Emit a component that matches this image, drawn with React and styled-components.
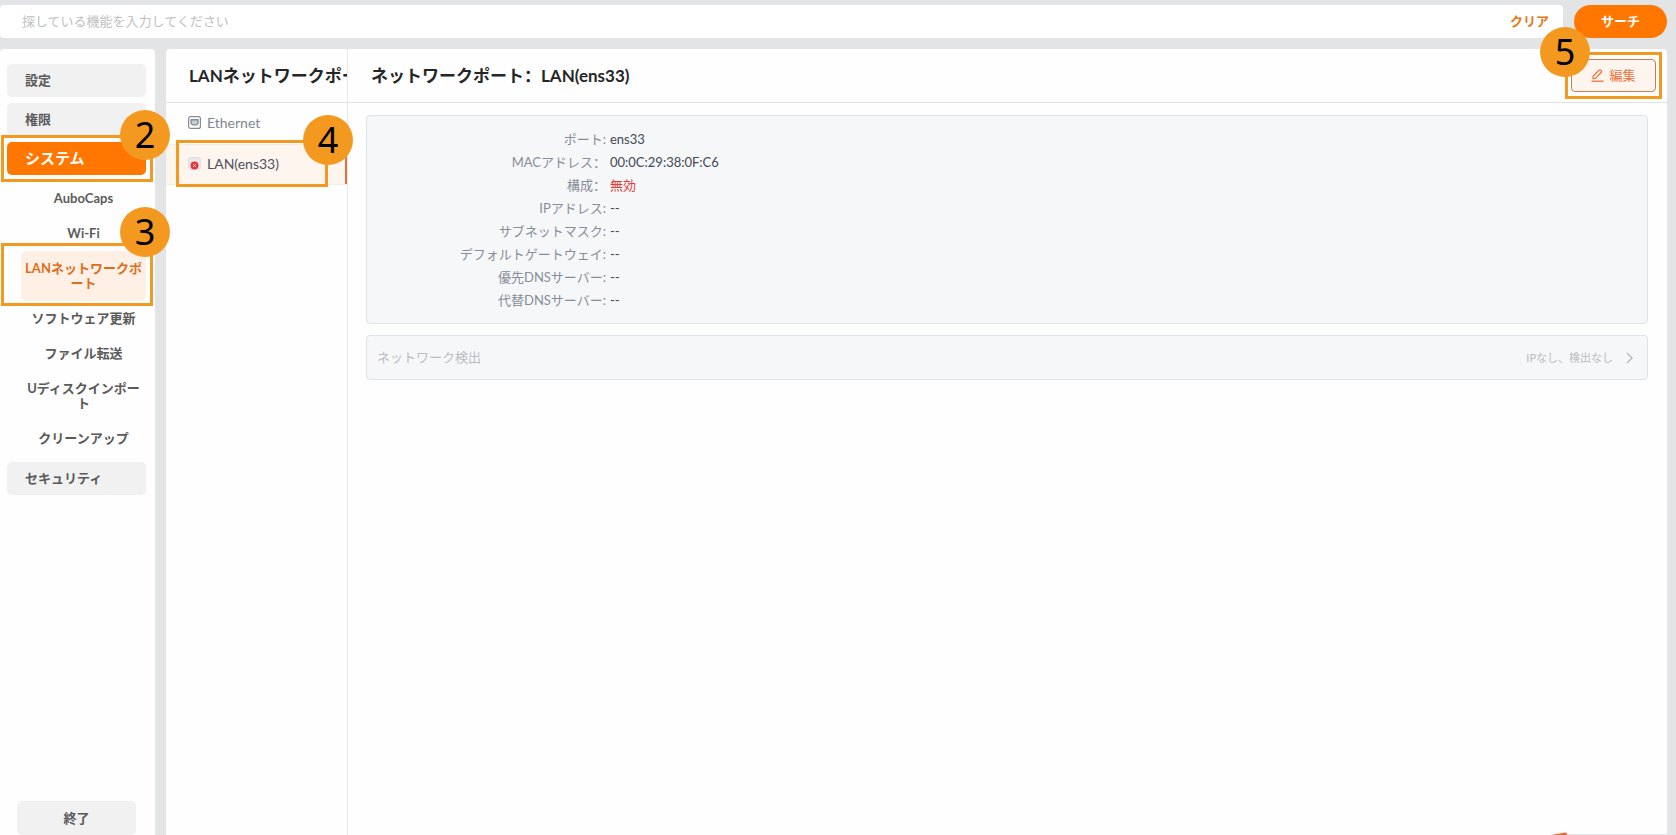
import styled, { createGlobalStyle } from "styled-components";

const GlobalStyle = createGlobalStyle`
  * {
    box-sizing: border-box;
  }

  body {
    margin: 0;
    background: #e2e4e6;
    color: #262626;
    font-family: "Lato", "Noto Sans CJK JP", sans-serif;
    font-size: 13px;
    line-height: 23px;
  }

  button,
  input {
    font: inherit;
  }
`;

const Page = styled.div`
  position: relative;
  display: flex;
  flex-direction: column;
  gap: 11px;
  height: 100vh;
  padding: 5px 9px 0 0;
  overflow: hidden;
`;

const SearchForm = styled.form`
  display: flex;
  gap: 11px;
  height: 33px;
`;

const SearchField = styled.div`
  display: flex;
  flex: 1;
  align-items: center;
  padding: 0 14px 0 22px;
  border-radius: 4px;
  background: #fff;
`;

const SearchInput = styled.input`
  flex: 1;
  padding: 0;
  border: none;
  outline: none;
  background: none;

  &::placeholder {
    color: #c0c0c0;
    opacity: 1;
  }
`;

const ClearButton = styled.button`
  padding: 0;
  border: none;
  background: none;
  color: #e87817;
  font-weight: 700;
`;

const SearchButton = styled.button`
  width: 93px;
  border: none;
  border-radius: 17px;
  background: #ff7700;
  color: #fff;
  font-weight: 700;
`;

const Body = styled.div`
  display: flex;
  flex: 1;
  gap: 11px;
  min-height: 0;
`;

const Sidebar = styled.nav`
  display: flex;
  flex-direction: column;
  justify-content: space-between;
  width: 155px;
  padding: 15px 9px 0 7px;
  border-radius: 4px 4px 0 0;
  background: #fefefe;
`;

const NavList = styled.div`
  display: flex;
  flex-direction: column;
  gap: 6px;
`;

const Marked = styled.div`
  position: relative;
`;

const NavButton = styled.button`
  display: block;
  width: 100%;
  height: 33px;
  padding: 0 18px;
  border: none;
  border-radius: 5px;
  background: ${({ $active }) => ($active ? "#ff7700" : "#f1f1f1")};
  color: ${({ $active }) => ($active ? "#fff" : "#5a5a5a")};
  font-size: ${({ $active }) => ($active ? "15px" : "13px")};
  font-weight: 700;
  text-align: left;
`;

const SubList = styled.div`
  padding-left: 14px;
`;

const SubButton = styled.button`
  display: block;
  width: 100%;
  padding: 10px 0;
  border: none;
  border-radius: 5px;
  background: ${({ $active }) => ($active ? "#fff0e6" : "none")};
  color: ${({ $active }) => ($active ? "#dc6e1c" : "#5a5a5a")};
  font-weight: 700;
  line-height: 15px;
  text-align: center;
`;

const ExitButton = styled.button`
  height: 34px;
  margin: 0 10px;
  border: none;
  border-radius: 5px;
  background: #f1f1f1;
  color: #5a5a5a;
  font-weight: 700;
`;

const Content = styled.main`
  display: flex;
  flex: 1;
  min-width: 0;
  border-radius: 4px 4px 0 0;
  background: #fefefe;
`;

const PortColumn = styled.section`
  width: 182px;
  border-right: 1px solid #e6e8ea;
`;

const ColumnHeader = styled.header`
  display: flex;
  align-items: center;
  justify-content: space-between;
  height: 54px;
  padding-left: 23px;
  padding-right: 11px;
  border-bottom: 1px solid #dfe1e3;
`;

const PortHeader = styled(ColumnHeader)`
  padding-right: 0;
  overflow: hidden;
`;

/* the SC face sets the full-width colon to the left of its cell */
const Title = styled.h2`
  margin: 0;
  font-family: "Lato", "Noto Sans CJK SC", sans-serif;
  font-size: 17px;
  font-weight: 700;
  white-space: nowrap;
`;

const PortRow = styled.button`
  display: flex;
  align-items: center;
  gap: 6px;
  width: 100%;
  height: 41px;
  padding: 0 22px 2px;
  border: solid #eceef0;
  border-width: ${({ $active }) => ($active ? "1px 0" : "0")};
  background: ${({ $active }) => ($active ? "#fff5ef" : "none")};
  box-shadow: ${({ $active }) => ($active ? "inset -2px 0 #e2733f" : "none")};
  color: ${({ $active }) => ($active ? "#4b5260" : "#7f8794")};
  font-size: 14px;
`;

const Detail = styled.section`
  flex: 1;
  min-width: 0;
`;

const EditButton = styled.button`
  display: flex;
  align-items: center;
  justify-content: center;
  gap: 5px;
  width: 85px;
  height: 33px;
  padding: 0;
  border: 1px solid #d07a50;
  border-radius: 4px;
  background: #fff5ef;
  color: #e8733c;
`;

const Cards = styled.div`
  display: flex;
  flex-direction: column;
  gap: 11px;
  padding: 12px 19px 12px 18px;
`;

const InfoCard = styled.dl`
  display: grid;
  grid-template-columns: 239px 1fr;
  column-gap: 4px;
  margin: 0;
  padding: 12px 0 11px;
  border: 1px solid #dfe3e8;
  border-radius: 4px;
  background: #f6f7f9;
`;

const InfoLabel = styled.dt`
  color: #868d98;
  font-family: "Lato", "Noto Sans CJK SC", sans-serif;
  text-align: right;
`;

const InfoValue = styled.dd`
  margin: 0;
  color: ${({ $alert }) => ($alert ? "#e83a3a" : "#424956")};
`;

const DetectButton = styled.button`
  display: flex;
  align-items: center;
  gap: 10px;
  height: 45px;
  padding: 0 12px 0 10px;
  border: 1px solid #dfe3e8;
  border-radius: 4px;
  background: #f6f7f9;
  color: #b9bcc0;
`;

const DetectNote = styled.span`
  margin-left: auto;
  font-size: 11px;
`;

const Callout = styled.div`
  position: absolute;
  inset: ${({ $inset }) => $inset};
  border: 3px solid #f4991f;
  pointer-events: none;
`;

const Step = styled.span`
  position: absolute;
  z-index: 1;
  top: ${({ $top }) => $top || "-28px"};
  ${({ $side }) => $side || "right"}: ${({ $offset }) => $offset || "-20px"};
  width: 50px;
  height: 50px;
  border-radius: 50%;
  background: #f4991f;
  color: #000;
  font-family: "Noto Sans", sans-serif;
  font-size: 36px;
  line-height: 50px;
  text-align: center;
`;

const Floating = styled.svg`
  position: absolute;
  right: 9px;
  bottom: 0;
`;

const subItems = [
  "AuboCaps",
  "Wi-Fi",
  "LANネットワークポート",
  "ソフトウェア更新",
  "ファイル転送",
  "Uディスクインポート",
  "クリーンアップ",
];

const info = [
  ["ポート:", "ens33"],
  ["MACアドレス：", "00:0C:29:38:0F:C6"],
  ["構成：", "無効"],
  ["IPアドレス:", "--"],
  ["サブネットマスク:", "--"],
  ["デフォルトゲートウェイ:", "--"],
  ["優先DNSサーバー:", "--"],
  ["代替DNSサーバー:", "--"],
];

const PortIcon = () => (
  <svg width="13" height="13" viewBox="0 0 13 13" fill="none" stroke="#858c98">
    <rect x="0.6" y="0.6" width="11.8" height="11.8" rx="2" strokeWidth="1.2" />
    <path
      d="M3 3.7h7v3.4L8.6 8.9H4.4L3 7.1z"
      fill="#c9cdd4"
      strokeWidth="1.4"
      strokeLinejoin="round"
    />
  </svg>
);

const PortErrorIcon = () => (
  <svg width="13" height="13" viewBox="0 0 13 13" fill="none">
    <rect x="0.6" y="0.6" width="11.8" height="11.8" rx="2" fill="#ece8e8" stroke="#dcdcdf" />
    <circle cx="6.5" cy="8.5" r="4" fill="#e5383b" />
    <path d="M5 7l3 3M8 7l-3 3" stroke="#ffc9c9" strokeWidth="1" />
  </svg>
);

const PenIcon = () => (
  <svg width="13" height="13" viewBox="0 0 13 13" fill="none" stroke="currentColor">
    <path
      d="M2 9.6V7.2L8 1.3q.9-.8 1.8 0l.4.4q.9.9 0 1.8L4.4 9.4z"
      strokeWidth="1.2"
      strokeLinejoin="round"
    />
    <path d="M.5 12.2h12" strokeWidth="1.3" />
  </svg>
);

const ChevronIcon = () => (
  <svg width="12" height="12" viewBox="0 0 12 12" fill="none" stroke="#b4b7bb">
    <path d="M4 1l5 5-5 5" strokeWidth="1.3" />
  </svg>
);

const App = () => {
  return (
    <>
      <GlobalStyle />
      <Page>
        <SearchForm onSubmit={(event) => event.preventDefault()}>
          <SearchField>
            <SearchInput
              type="text"
              aria-label="機能"
              placeholder="探している機能を入力してください"
            />
            <ClearButton type="reset">クリア</ClearButton>
          </SearchField>
          <SearchButton type="submit">サーチ</SearchButton>
        </SearchForm>
        <Body>
          <Sidebar>
            <NavList>
              <NavButton>設定</NavButton>
              <NavButton>権限</NavButton>
              <Marked>
                <NavButton $active>システム</NavButton>
                <Callout $inset="-7px -7px -7px -6px">
                  <Step>2</Step>
                </Callout>
              </Marked>
              <SubList>
                {subItems.map((item, index) => (
                  <Marked key={item}>
                    <SubButton $active={index === 2}>{item}</SubButton>
                    {index === 2 && (
                      <Callout $inset="-8px -7px -5px -20px">
                        <Step $top="-39px">3</Step>
                      </Callout>
                    )}
                  </Marked>
                ))}
              </SubList>
              <NavButton>セキュリティ</NavButton>
            </NavList>
            <ExitButton>終了</ExitButton>
          </Sidebar>
          <Content>
            <PortColumn>
              <PortHeader>
                <Title>LANネットワークポート</Title>
              </PortHeader>
              <PortRow>
                <PortIcon />
                Ethernet
              </PortRow>
              <Marked>
                <PortRow $active>
                  <PortErrorIcon />
                  LAN(ens33)
                </PortRow>
                <Callout $inset="-4px 19px -2px 10px">
                  <Step $offset="-28px">4</Step>
                </Callout>
              </Marked>
            </PortColumn>
            <Detail>
              <ColumnHeader>
                <Title>ネットワークポート：LAN(ens33)</Title>
                <Marked>
                  <EditButton>
                    <PenIcon />
                    編集
                  </EditButton>
                  <Callout $inset="-7px -6px">
                    <Step $side="left" $offset="-28px">
                      5
                    </Step>
                  </Callout>
                </Marked>
              </ColumnHeader>
              <Cards>
                <InfoCard>
                  {info.map(([label, value]) => [
                    <InfoLabel key={label}>{label}</InfoLabel>,
                    <InfoValue key={`${label}-value`} $alert={value === "無効"}>
                      {value}
                    </InfoValue>,
                  ])}
                </InfoCard>
                <DetectButton>
                  ネットワーク検出
                  <DetectNote>IPなし、検出なし</DetectNote>
                  <ChevronIcon />
                </DetectButton>
              </Cards>
            </Detail>
          </Content>
        </Body>
        <Floating width="116" height="3" viewBox="0 0 116 3">
          <path d="M16 2.5h100" stroke="#e2e4e6" />
          <path d="M0 3L14 0.5q2-.5 2.5 2.5z" fill="#f26a3a" />
        </Floating>
      </Page>
    </>
  );
};

export default App;
